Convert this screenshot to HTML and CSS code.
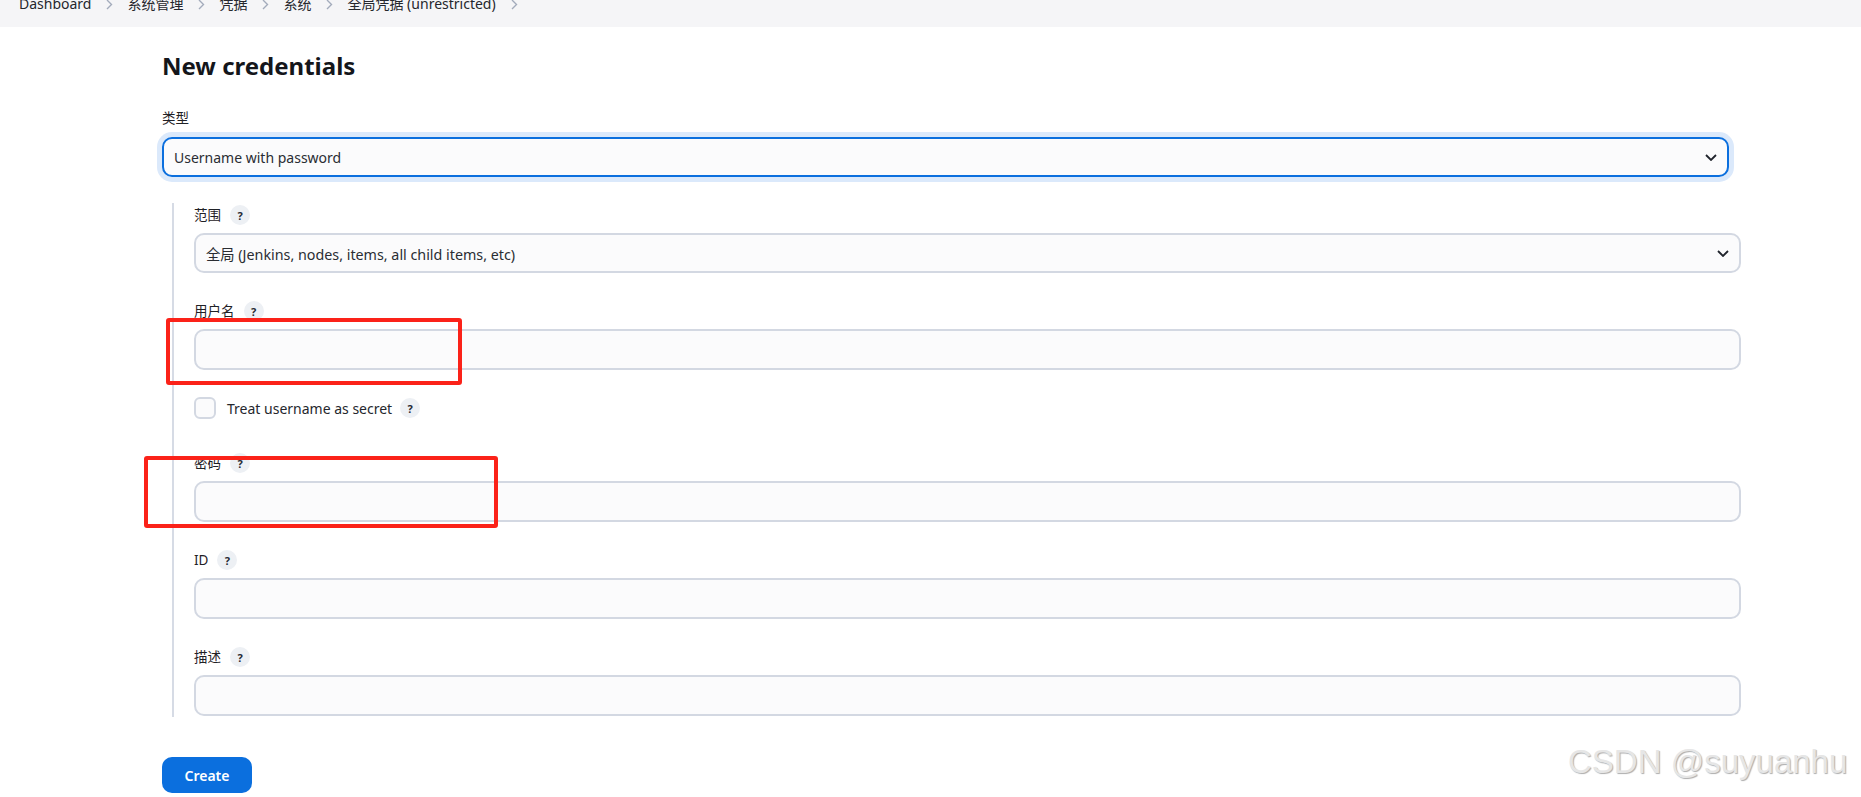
FILE: index.html
```html
<!DOCTYPE html>
<html lang="zh-CN">
<head>
<meta charset="utf-8">
<title>New credentials</title>
<link rel="stylesheet" href="styles.css">
</head>
<body>
<div class="breadcrumbs">
  <ol class="crumbs">
    <li class="crumb">Dashboard</li>
    <li class="sep"><svg viewBox="0 0 7 11" width="7" height="11"><path d="M1 1 L5.5 5.5 L1 10" fill="none" stroke="#a3abbb" stroke-width="1.4"/></svg></li>
    <li class="crumb">系统管理</li>
    <li class="sep"><svg viewBox="0 0 7 11" width="7" height="11"><path d="M1 1 L5.5 5.5 L1 10" fill="none" stroke="#a3abbb" stroke-width="1.4"/></svg></li>
    <li class="crumb">凭据</li>
    <li class="sep"><svg viewBox="0 0 7 11" width="7" height="11"><path d="M1 1 L5.5 5.5 L1 10" fill="none" stroke="#a3abbb" stroke-width="1.4"/></svg></li>
    <li class="crumb">系统</li>
    <li class="sep"><svg viewBox="0 0 7 11" width="7" height="11"><path d="M1 1 L5.5 5.5 L1 10" fill="none" stroke="#a3abbb" stroke-width="1.4"/></svg></li>
    <li class="crumb">全局凭据 (unrestricted)</li>
    <li class="sep"><svg viewBox="0 0 7 11" width="7" height="11"><path d="M1 1 L5.5 5.5 L1 10" fill="none" stroke="#a3abbb" stroke-width="1.4"/></svg></li>
  </ol>
</div>

<main class="page">
  <h1 class="title">New credentials</h1>

  <div class="field field-type">
    <div class="label-row"><span class="label">类型</span></div>
    <div class="select select-focused">
      <span class="select-text">Username with password</span>
      <svg class="chev" viewBox="0 0 12 7" width="12" height="7"><path d="M1 1 L6 6 L11 1" fill="none" stroke="#20242c" stroke-width="1.8"/></svg>
    </div>
  </div>

  <div class="nested">
    <div class="field field-first">
      <div class="label-row"><span class="label">范围</span><span class="help">?</span></div>
      <div class="select">
        <span class="select-text select-text-wide">全局 (Jenkins, nodes, items, all child items, etc)</span>
        <svg class="chev" viewBox="0 0 12 7" width="12" height="7"><path d="M1 1 L6 6 L11 1" fill="none" stroke="#20242c" stroke-width="1.8"/></svg>
      </div>
    </div>

    <div class="field">
      <div class="label-row"><span class="label">用户名</span><span class="help">?</span></div>
      <div class="input"></div>
    </div>

    <div class="check-row">
      <span class="checkbox"></span>
      <span class="check-label">Treat username as secret</span>
      <span class="help">?</span>
    </div>

    <div class="field field-after-check">
      <div class="label-row"><span class="label">密码</span><span class="help">?</span></div>
      <div class="input"></div>
    </div>

    <div class="field">
      <div class="label-row"><span class="label">ID</span><span class="help">?</span></div>
      <div class="input"></div>
    </div>

    <div class="field">
      <div class="label-row"><span class="label">描述</span><span class="help">?</span></div>
      <div class="input"></div>
    </div>
  </div>

  <button class="btn-create" type="button">Create</button>
</main>

<div class="annot annot-user"></div>
<div class="annot annot-pass"></div>
<div class="watermark">CSDN @suyuanhu</div>
</body>
</html>
```

FILE: styles.css
```css
* { box-sizing: border-box; }

html, body {
  margin: 0;
  padding: 0;
  background: #ffffff;
  font-family: "Noto Sans", "Noto Sans CJK SC", sans-serif;
  color: #1d1f24;
  width: 1861px;
  height: 797px;
  overflow: hidden;
}

/* breadcrumbs */
.breadcrumbs {
  height: 27px;
  background: #f5f5f7;
  display: flex;
  align-items: flex-end;
  overflow: hidden;
  padding: 0 0 13px 19px;
}
.crumbs {
  list-style: none;
  margin: 0;
  padding: 0;
  display: flex;
  align-items: center;
  font-size: 14px;
  line-height: 20px;
  color: #25272d;
}
.crumb { white-space: nowrap; }
.sep {
  display: flex;
  align-items: center;
  margin: 0 14px 0 15px;
}
.sep svg { display: block; }

/* page */
.page {
  padding: 0 120px 0 162px;
}
.title {
  margin: 22px 0 0 0;
  font-size: 24px;
  line-height: 34px;
  font-weight: 700;
  color: #14161b;
}

.field { margin-top: 28px; }
.field-type { margin-top: 25px; }
.field-first { margin-top: 0; }
.field-after-check { margin-top: 34px; }

.label-row {
  display: flex;
  align-items: center;
  height: 20px;
  margin-bottom: 8px;
  gap: 9px;
}
.field-type .label-row { margin-bottom: 9px; }
.label {
  font-size: 13.5px;
  line-height: 20px;
  color: #1f2126;
}
.help {
  width: 20px;
  height: 20px;
  border-radius: 50%;
  background: #edf0f4;
  color: #262a33;
  font-size: 11px;
  font-weight: 700;
  display: flex;
  align-items: center;
  justify-content: center;
  line-height: 1;
}

.select {
  height: 40px;
  border: 2px solid #d3d8e2;
  border-radius: 10px;
  background: #fbfbfc;
  display: flex;
  align-items: center;
  justify-content: space-between;
  padding: 0 10px 0 10px;
}
.select-focused {
  border-color: #0b6fde;
  box-shadow: 0 0 0 5px #dbe9fb;
  margin-right: 12px;
}
.select-text {
  font-size: 14px;
  color: #2a2d33;
  white-space: nowrap;
}
.select-text-wide { font-size: 14.3px; }
.chev { display: block; }

.input {
  height: 41px;
  border: 2px solid #d3d8e2;
  border-radius: 10px;
  background: #fbfbfc;
}

.nested {
  margin-top: 26px;
  margin-left: 10px;
  border-left: 2px solid #d6dbe5;
  padding: 2px 0 1px 20px;
}

.check-row {
  margin-top: 27px;
  display: flex;
  align-items: center;
  height: 22px;
}
.checkbox {
  width: 22px;
  height: 22px;
  border: 2px solid #d3d8e2;
  border-radius: 6px;
  background: #fbfbfc;
}
.check-label {
  margin-left: 11px;
  font-size: 14px;
  color: #25272d;
}
.check-row .help { margin-left: 8px; }

.btn-create {
  margin-top: 40px;
  width: 90px;
  height: 36px;
  border: none;
  border-radius: 10px;
  background: #0b6fde;
  color: #ffffff;
  font-family: "Noto Sans", "Noto Sans CJK SC", sans-serif;
  font-size: 14px;
  font-weight: 600;
  display: block;
  padding: 0;
}

/* screenshot annotations (drawn over content) */
.annot {
  position: absolute;
  border: 4px solid #fb2219;
  border-radius: 3px;
}
.annot-user { left: 166px; top: 318px; width: 296px; height: 67px; }
.annot-pass { left: 144px; top: 456px; width: 354px; height: 72px; }

.watermark {
  position: absolute;
  left: 1568px;
  top: 744px;
  font-family: "Liberation Sans", Arial, sans-serif;
  font-size: 33px;
  line-height: 36px;
  color: #e6e6e6;
  text-shadow: 1px 1px 1px #adadad;
  white-space: nowrap;
}
```
